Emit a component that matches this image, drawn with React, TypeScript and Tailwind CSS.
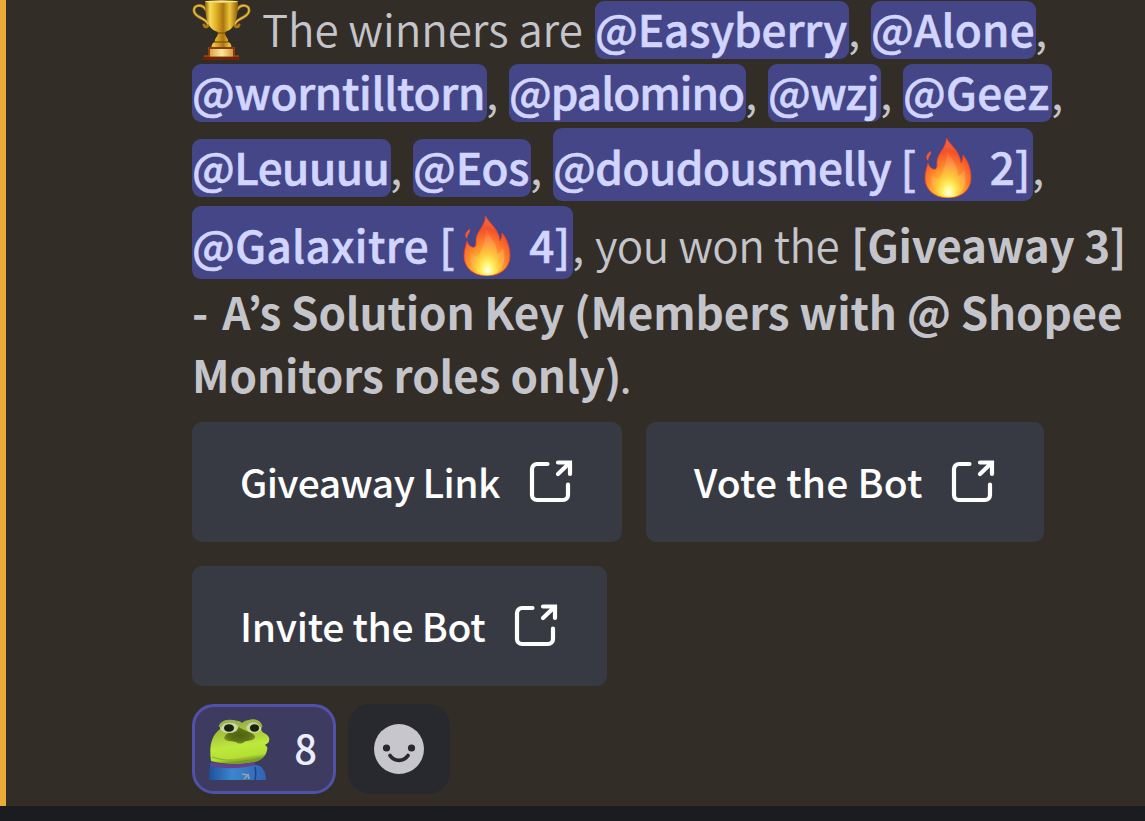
import React from 'react';

function Trophy() {
  return (
    <svg viewBox="0 0 60 60" className="h-[60px] w-[60px] shrink-0 self-start">
      <defs>
        <linearGradient id="cup" x1="0" x2="1">
          <stop offset="0" stopColor="#8a5c06" />
          <stop offset="0.15" stopColor="#f7dd55" />
          <stop offset="0.35" stopColor="#e0ae26" />
          <stop offset="0.55" stopColor="#a8750f" />
          <stop offset="0.75" stopColor="#eec63a" />
          <stop offset="1" stopColor="#8a5a08" />
        </linearGradient>
        <linearGradient id="plate" x1="0" x2="1">
          <stop offset="0" stopColor="#d9a545" />
          <stop offset="0.5" stopColor="#fbe6a0" />
          <stop offset="1" stopColor="#d39a3c" />
        </linearGradient>
      </defs>
      <g fill="none" strokeLinecap="round">
        <path d="M14 10C10 3 1 5 2 11c1 7 12 7 14 13 1 3-3 4-4 1" stroke="#a97714" strokeWidth="3" />
        <path d="M45 10c4-7 13-5 12 1-1 7-12 7-14 13-1 3 3 4 4 1" stroke="#a97714" strokeWidth="3" />
        <path d="M14 10C10 3 1 5 2 11c1 7 12 7 14 13" stroke="#e8c65a" strokeWidth="1.3" />
        <path d="M45 10c4-7 13-5 12 1-1 7-12 7-14 13" stroke="#e8c65a" strokeWidth="1.3" />
      </g>
      <path d="M13 1h33c0 16-2 28-13 31-1 4 4 6 3 10 3 1 4 4 3 6H20c-1-2 0-5 3-6-1-4 4-6 3-10C15 29 13 17 13 1z" fill="url(#cup)" />
      <path d="M25.500 33h8M23 42h13" stroke="#8a5a08" strokeWidth="1.5" />
      <ellipse cx="29.500" cy="1.500" rx="16.500" ry="1.200" fill="#fbe67a" />
      <path d="M16 47h27v9H16z" fill="#8c3a10" />
      <path d="M12 56h35l1 4H10z" fill="#6d2509" />
      <path d="M12 56h35" stroke="#b8561f" strokeWidth="1" />
      <path d="M18 49h23v7.500H18z" fill="url(#plate)" />
    </svg>
  );
}

function Fire() {
  return (
    <svg viewBox="0 0 50 60" className="h-[60px] w-[50px] shrink-0 self-end">
      <defs>
        <radialGradient id="flame" cx="0.48" cy="0.9" r="0.85">
          <stop offset="0" stopColor="#fff23a" />
          <stop offset="0.25" stopColor="#ffc62c" />
          <stop offset="0.5" stopColor="#ff8a2a" />
          <stop offset="0.8" stopColor="#f4502a" />
          <stop offset="1" stopColor="#ee6a45" />
        </radialGradient>
        <radialGradient id="core" cx="0.5" cy="0.9" r="0.8">
          <stop offset="0" stopColor="#fffff0" />
          <stop offset="0.2" stopColor="#fff46a" />
          <stop offset="0.45" stopColor="#ffc83a" />
          <stop offset="0.75" stopColor="#ff964a" />
          <stop offset="1" stopColor="#ff7a45" stopOpacity="0.4" />
        </radialGradient>
      </defs>
      <path d="M22.500 0c3 7 13 12 14.500 25 1-2 2-4 2-8 5 6 8 14 8 23 0 11-9 20-23 20S1 51 1 40c0-6 2-11 3-15 1 3 2 5 5 6 3 1 4-1 4-4-1-12 9-15 9.500-27z" fill="url(#flame)" stroke="#e4432a" strokeWidth="0.800" />
      <path d="M6.500 13c2 4-3 5-2 10-4-3-2-7 2-10z" fill="#ee5a32" />
      <path d="M23 12c2 8 11 13 11 26 3-1 4-3 6-6 4 12-1 27-14 27-14 0-20-10-18-22 2 3 5 4 8 3 3-8 7-14 7-28z" fill="url(#core)" />
    </svg>
  );
}

function Frog() {
  return (
    <svg viewBox="0 0 62 61" className="h-[61px] w-[62px]">
      <defs>
        <linearGradient id="skin" x1="0" x2="0.200" y1="0" y2="1">
          <stop offset="0" stopColor="#8fa838" />
          <stop offset="0.4" stopColor="#aacb3c" />
          <stop offset="0.65" stopColor="#bde83c" />
          <stop offset="0.9" stopColor="#b4e034" />
          <stop offset="1" stopColor="#7d9b28" />
        </linearGradient>
        <linearGradient id="shirt" x1="0" x2="1">
          <stop offset="0" stopColor="#1f4f9b" />
          <stop offset="0.4" stopColor="#3c86cf" />
          <stop offset="1" stopColor="#2f63b5" />
        </linearGradient>
        <radialGradient id="muzzle">
          <stop offset="0" stopColor="#4f6110" />
          <stop offset="0.7" stopColor="#5e7216" />
          <stop offset="1" stopColor="#758d22" />
        </radialGradient>
      </defs>
      <path d="M1 43c13 5 34 5 45 3 7 0 11 6 11 15H0z" fill="url(#shirt)" />
      <path d="M46 48c1 4 1 8 0 13" stroke="#1d4482" strokeWidth="1.500" fill="none" />
      <path d="M33 55l6 1-4 4M39 55l1 5" stroke="#93a8a0" strokeWidth="1.500" fill="none" />
      <path d="M11 10C14 2 28-1 33 4 38-1 50 0 52 10c1 2 1 3 3 4 4 2 6 4 5 8 0 2-3 3-4 4 2 1 3 3 2 5-1 7-7 11-12 12-14 3-29 3-44-1C0 28 2 17 11 10z" fill="url(#skin)" />
      <path d="M3 38c15 5 30 3 44 1" stroke="#93b52c" strokeWidth="1.200" fill="none" />
      <path d="M2 43c13 3 31 3 44 0v3c-13 4-32 4-44 1z" fill="#63438c" />
      <path d="M15 19c2-6 9-7 15-11 5 4 14 5 16 9 1 5-7 4-11 6-2 2-6 2-8 0-4-1-10 0-12-4z" fill="url(#muzzle)" />
      <ellipse cx="20" cy="8.500" rx="9" ry="5.500" fill="#c9d6a8" />
      <ellipse cx="45" cy="8.500" rx="7.500" ry="5.500" fill="#c9d6a8" />
      <ellipse cx="20" cy="9" rx="5" ry="3.800" fill="#1c200f" />
      <ellipse cx="45.500" cy="9" rx="4.600" ry="3.800" fill="#1c200f" />
      <path d="M11 8c2-7 15-8 20-1M37 6c3-6 13-6 15 2" stroke="#9db44c" strokeWidth="3" fill="none" />
    </svg>
  );
}

function OpenIcon() {
  return (
    <svg viewBox="0 0 44 44" fill="none" stroke="currentColor" strokeWidth="4.200" strokeLinecap="round" className="-mt-[2px] h-[44px] w-[44px] shrink-0">
      <path d="M18.500 5H8a5 5 0 0 0-5 5v26a5 5 0 0 0 5 5h26a5 5 0 0 0 5-5V25.500" />
      <path d="M29 3.500h12V15M29 15l11.500-11" />
    </svg>
  );
}

function Mention({ className, children }: { className: string; children: React.ReactNode }) {
  return (
    <span className={`h-[58px] shrink-0 rounded-[9px] bg-[#454687] font-medium leading-[55px] text-[#d2d5ff] [-webkit-text-stroke:0.6px] ${className}`}>
      {children}
    </span>
  );
}

function FireMention({ name, count, className }: { name: string; count: string; className: string }) {
  return (
    <span className={`flex h-[73px] shrink-0 items-baseline rounded-[9px] bg-[#454687] font-medium leading-[77px] text-[#d2d5ff] [-webkit-text-stroke:0.6px] ${className}`}>
      <span>{name}</span>
      <span className="flex h-[70px] self-start pl-[8px]">
        <Fire />
      </span>
      <span className="pl-[16px] tracking-normal">{count}</span>
    </span>
  );
}

function Comma() {
  return <span className="-ml-px w-[23px] shrink-0 leading-[55px]">,</span>;
}

function LinkButton({ className, label, width }: { className: string; label: string; width: string }) {
  return (
    <button className={`flex h-[120px] items-center justify-between rounded-[10px] bg-[#383a43] pr-[49px] pl-12 text-[39px] font-medium text-white ${width}`}>
      <span className={`-mt-[3px] leading-[60px] ${className}`}>{label}</span>
      <OpenIcon />
    </button>
  );
}

export default function App() {
  return (
    <div className="h-[821px] w-[1145px] overflow-hidden bg-[#1b1c20] font-['Noto_Sans_CJK_JP','Noto_Sans',sans-serif]">
      <div className="h-[806px] border-l-[6px] border-[#ecab36] bg-[#322d26] pl-[186px]">
        <div className="whitespace-pre text-[44px] text-[#c4c4cb]">
          <div className="flex h-16 items-baseline pt-px">
            <div className="-mt-px self-start pr-[10px]">
              <Trophy />
            </div>
            <span className="w-[333px] font-[350] leading-[55px] tracking-[-0.100px]">The winners are</span>
            <Mention className="w-[254px] tracking-[-0.100px]">@Easyberry</Mention>
            <Comma />
            <Mention className="w-[165px] tracking-[0.200px]">@Alone</Mention>
            <Comma />
          </div>
          <div className="flex h-16 items-baseline">
            <Mention className="w-[295px] tracking-[-0.300px]">@worntilltorn</Mention>
            <Comma />
            <Mention className="w-[237px] tracking-[-1px]">@palomino</Mention>
            <Comma />
            <Mention className="w-[113px] tracking-[-0.400px]">@wzj</Mention>
            <Comma />
            <Mention className="w-[149px] tracking-[0.300px]">@Geez</Mention>
            <Comma />
          </div>
          <div className="flex h-[78px] items-baseline">
            <Mention className="w-[199px] tracking-[-0.5px]">@Leuuuu</Mention>
            <Comma />
            <Mention className="w-[118px] tracking-[-0.100px]">@Eos</Mention>
            <Comma />
            <FireMention className="w-[480px] tracking-[-0.5px]" name="@doudousmelly [" count="2]" />
            <Comma />
          </div>
          <div className="flex h-[78px] items-baseline">
            <FireMention className="w-[381px] tracking-[0.400px]" name="@Galaxitre [" count="4]" />
            <Comma />
            <span className="w-[256px] font-[350] leading-[55px] tracking-[-0.5px]">you won the</span>
            <b className="leading-[55px] tracking-[-0.300px]">[Giveaway 3]</b>
          </div>
          <div className="h-[63px] leading-[54px]">
            <b className="tracking-[2px]">- </b>
            <b className="tracking-[-0.140px]">A’s Solution Key (Members with @ Shopee</b>
          </div>
          <div className="h-[63px] leading-[54px]">
            <b className="tracking-[-0.100px]">Monitors roles only)</b>
            <span className="-ml-[2px]">.</span>
          </div>
        </div>

        <div className="mt-3 flex flex-wrap gap-6">
          <LinkButton width="w-[430px]" className="tracking-[-0.600px]" label="Giveaway Link" />
          <LinkButton width="w-[398px]" className="tracking-[0.200px]" label="Vote the Bot" />
          <LinkButton width="w-[415px]" className="tracking-[-0.300px]" label="Invite the Bot" />
        </div>

        <div className="mt-[18px] flex gap-3">
          <button className="flex h-[90px] w-[144px] items-center justify-between rounded-[22px] border-[3px] border-[#5151a9] bg-[#3d3b5f] pr-[16px] pl-[14px] text-[40px] font-medium text-[#ececfb]">
            <Frog />
            <span className="-mt-[4px] leading-[60px]">8</span>
          </button>
          <button className="flex h-[90px] w-[102px] items-center justify-center rounded-[22px] bg-[#28282f]">
            <svg viewBox="0 0 50 50" className="h-[50px] w-[50px]">
              <circle cx="25" cy="25" r="25" fill="#c6c6cc" />
              <circle cx="12.500" cy="24" r="3.600" fill="#28282f" />
              <circle cx="37.500" cy="24" r="3.600" fill="#28282f" />
              <path d="M16 31.500c4.500 6.500 13.500 6.500 18 0" fill="none" stroke="#28282f" strokeWidth="3.800" strokeLinecap="round" />
            </svg>
          </button>
        </div>
      </div>
    </div>
  );
}
